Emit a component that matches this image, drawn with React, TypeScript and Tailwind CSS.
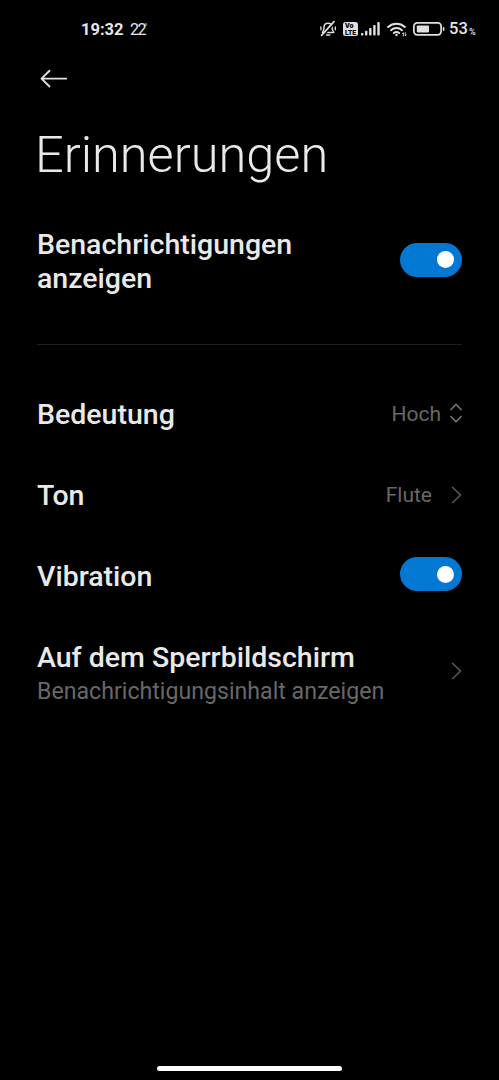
import { useState } from "react";
import type { ReactNode } from "react";

/* ---------- STATUS ICONS ---------- */
function BellOffIcon() {
  return (
    <svg width="18" height="18" viewBox="0 0 18 18" fill="none" stroke="#e0e0e0" strokeWidth="1.5" strokeLinecap="round" strokeLinejoin="round">
      <path d="M9 3.200c-2.500 0-4 1.700-4 4.200 0 2.700-.5 3.500-1.600 5h11.400c-1.200-1.500-1.700-2.300-1.700-5 0-2.500-1.600-4.200-4.100-4.200Z" />
      <path d="M7.800 15h2.800" strokeWidth="1.7" />
      <path d="M16.300 2.300 4 15.900" stroke="#000000" strokeWidth="1.5" />
      <path d="M15 1.700 2.500 15.300" strokeWidth="1.7" />
      <path d="M1.900 6.800v3M16.300 6.800v3" strokeWidth="1.3" />
    </svg>
  );
}

function VolteIcon() {
  return (
    <svg width="15" height="14" viewBox="0 0 15 14" fontFamily="Roboto, sans-serif" fontWeight="900">
      <rect width="15" height="14" rx="2.500" fill="#e0e0e0" />
      <text x="2" y="6.300" fontSize="6.5" textLength="8.5" lengthAdjust="spacingAndGlyphs">Vo</text>
      <text x="2" y="12.500" fontSize="7" textLength="11" lengthAdjust="spacingAndGlyphs">LTE</text>
    </svg>
  );
}

function SignalIcon() {
  return (
    <svg width="19" height="14" viewBox="0 0 19 14" fill="#e0e0e0">
      <rect x="0" y="11" width="2.4" height="2.5" rx=".8" />
      <rect x="4" y="8.8" width="2.4" height="4.7" rx=".8" />
      <rect x="8.1" y="6" width="2.4" height="7.5" rx=".8" />
      <rect x="12.2" y="3" width="2.4" height="10.5" rx=".8" />
      <rect x="16.3" y="0" width="2.4" height="13.5" rx=".8" />
    </svg>
  );
}

function WifiIcon() {
  return (
    <svg width="20" height="15" viewBox="0 0 20 15" fill="none" stroke="#e0e0e0" strokeWidth="2" strokeLinecap="round">
      <path d="M1.200 5a12.300 12.300 0 0 1 16.600 0" />
      <path d="M4 8.200a8.300 8.300 0 0 1 11 0" />
      <path d="M6.800 11a4.300 4.300 0 0 1 5.400 0" />
      <circle cx="9.5" cy="13" r="1.2" fill="#e0e0e0" stroke="none" />
      <path d="M16.400 14v-3.300l-.9 1M18.300 10.700V14l.9-1" strokeWidth=".9" />
    </svg>
  );
}

function BatteryIcon() {
  return (
    <svg width="32" height="14" viewBox="0 0 32 14">
      <rect x=".9" y=".9" width="27.2" height="12" rx="3.3" fill="none" stroke="#e0e0e0" strokeWidth="1.7" />
      <rect x="3.8" y="3.4" width="12.2" height="7" rx=".8" fill="#e0e0e0" />
      <rect x="29.8" y="5" width="1.6" height="4" rx=".8" fill="#e0e0e0" />
    </svg>
  );
}

function StatusBar() {
  return (
    <div className="flex h-[58px] items-center pl-[81px] pr-[23px] text-[#e6e6e6]">
      <span className="mt-[2px] w-[42px] text-[16.5px] font-bold leading-none">19:32</span>
      <span className="ml-[7px] mt-[2px] w-[14px] text-[16px] leading-none tracking-[-1.4px]">22</span>
      <span className="-mt-1 text-[9px] leading-none">°</span>
      <div className="ml-auto flex items-center">
        <BellOffIcon />
        <div className="ml-[6px]"><VolteIcon /></div>
        <div className="ml-[3px]"><SignalIcon /></div>
        <div className="ml-[7px]"><WifiIcon /></div>
        <div className="ml-[6px]"><BatteryIcon /></div>
        <span className="ml-[4px] mt-px w-[20px] text-[16.5px] font-medium leading-none">53</span>
        <span className="mt-[6px] w-[7px] text-[9px] font-medium leading-none">%</span>
      </div>
    </div>
  );
}

/* ---------- CONTROLS ---------- */
function Toggle({ label }: { label: string }) {
  const [on, setOn] = useState(true);

  return (
    <button
      role="switch"
      aria-checked={on}
      aria-label={label}
      onClick={() => setOn(!on)}
      className={`mb-[5px] flex h-[34px] w-[62px] shrink-0 items-center rounded-full px-[8.5px] ${
        on ? "justify-end bg-[#0278d2]" : "justify-start bg-[#333333]"
      }`}
    >
      <span className="size-[17px] rounded-full bg-white" />
    </button>
  );
}

function ChevronRight() {
  return (
    <svg width="11" height="18" viewBox="0 0 11 18" fill="none" stroke="#5c5c5c" strokeWidth="1.4">
      <path d="M1.200 1l8.300 8-8.300 8" />
    </svg>
  );
}

function UpDown() {
  return (
    <svg width="12" height="20" viewBox="0 0 12 20" fill="none" stroke="#7d7d7d" strokeWidth="1.5">
      <path d="M.5 7 6 1.300 11.500 7M.5 13 6 18.700l5.500-5.700" />
    </svg>
  );
}

function Row({ title, children }: { title: string; children: ReactNode }) {
  return (
    <div className="flex h-[81px] items-center justify-between">
      <span className="text-[28.5px] font-medium leading-[34px]">{title}</span>
      {children}
    </div>
  );
}

export default function App() {
  return (
    <div className="flex h-[1080px] w-full flex-col overflow-hidden bg-black font-[Roboto,sans-serif] text-[#e9e9e9]">
      <StatusBar />

      <main className="flex-1 px-[37px]">
        <button aria-label="Zurück" className="ml-[3px] mt-[11px] block">
          <svg width="28" height="20" viewBox="0 0 28 20" fill="none" stroke="#e0e0e0" strokeWidth="1.9" strokeLinecap="round" strokeLinejoin="round">
            <path d="M9.500 1.700 1.500 9.600l8 7.900M1.500 9.600h24.700" />
          </svg>
        </button>

        <h1 className="-ml-[2px] mt-[36px] text-[50.5px] font-light leading-[60px]">Erinnerungen</h1>

        <div className="mt-[37px] flex h-[80px] items-center justify-between">
          <span className="w-[300px] text-[28.5px] font-medium leading-[34px]">
            Benachrichtigungen anzeigen
          </span>
          <Toggle label="Benachrichtigungen anzeigen" />
        </div>

        <div className="mt-[42px] h-px bg-[#1d1d1d]" />

        <div className="mt-[29px]">
          <Row title="Bedeutung">
            <div className="flex items-center gap-[9px]">
              <span className="text-[21px] leading-none text-[#686868]">Hoch</span>
              <div className="mb-[3px]"><UpDown /></div>
            </div>
          </Row>
          <Row title="Ton">
            <div className="flex items-center gap-[19px]">
              <span className="text-[21px] leading-none text-[#686868]">Flute</span>
              <div className="mb-[2px]"><ChevronRight /></div>
            </div>
          </Row>
          <Row title="Vibration">
            <Toggle label="Vibration" />
          </Row>
          <div className="mt-[24px] flex items-center justify-between">
            <div className="flex flex-col">
              <span className="text-[28.5px] font-medium leading-[34px]">Auf dem Sperrbildschirm</span>
              <span className="text-[23.15px] leading-[34px] text-[#686868]">Benachrichtigungsinhalt anzeigen</span>
            </div>
            <div className="mb-[8px]"><ChevronRight /></div>
          </div>
        </div>
      </main>

      <div className="mx-auto mb-[9px] h-[5px] w-[185px] rounded-full bg-white" />
    </div>
  );
}
